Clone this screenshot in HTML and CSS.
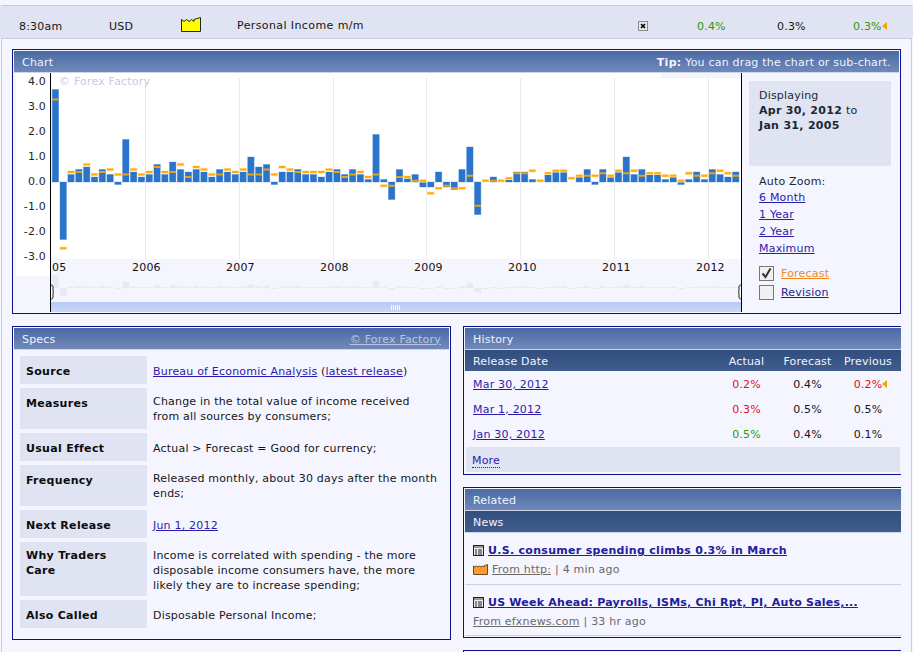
FILE: index.html
```html
<!DOCTYPE html>
<html lang="en">
<head>
<meta charset="utf-8">
<title>Personal Income m/m</title>
<link rel="stylesheet" href="styles.css">
</head>
<body>
<div class="page">
  <div class="top-strip"></div>
  <div class="event-row">
    <span>8:30am</span>
    <span>USD</span>
    <svg class="impact" width="20" height="15" viewBox="0 0 20 15"><path d="M.5 14.500V2.500L3 4.500 5.500 2.500 8 4.500 10.500 2.500 13 4.500V2.500L19.500.5V14.500Z" fill="#ffff00" stroke="#222" stroke-width="1"/></svg>
    <span class="event-title">Personal Income m/m</span>
    <svg width="10" height="10" viewBox="0 0 10 10"><rect x=".5" y=".5" width="9" height="9" fill="#e8e8e8" stroke="#8a8a8a"/><path d="M3 3l4 4M7 3l-4 4" stroke="#000" stroke-width="1.6"/></svg>
    <span class="good">0.4%</span>
    <span>0.3%</span>
    <span><span class="good flagged">0.3%<svg class="flag" width="6" height="8" viewBox="0 0 6 8"><path d="M0 4l5-4v8z" fill="#f2a400"/></svg></span></span>
  </div>
  <div class="detail">
    <section class="panel">
      <header class="panel-head"><span>Chart</span><span><b>Tip:</b> You can drag the chart or sub-chart.</span></header>
      <div class="chart-body">
        <svg class="chart" id="chart" width="728" height="239" viewBox="14 73 728 239">
          <defs>
            <linearGradient id="band" x1="0" y1="0" x2="0" y2="1"><stop offset="0" stop-color="#b6c9f5"/><stop offset="1" stop-color="#c9d7f9"/></linearGradient>
          </defs>
          <rect class="plot-back" x="14" y="73" width="728" height="239"/>
          <rect class="plot-white" x="16" y="73" width="34" height="203"/>
          <rect class="plot-white" x="51" y="78" width="690" height="181"/>
          <rect class="plot-white" x="51" y="73" width="610" height="5"/>
          <g class="grid">
            <rect x="145" y="78" width="1" height="181"/><rect x="239" y="78" width="1" height="181"/>
            <rect x="333" y="78" width="1" height="181"/><rect x="426" y="78" width="1" height="181"/>
            <rect x="520" y="78" width="1" height="181"/><rect x="614" y="78" width="1" height="181"/>
            <rect x="708" y="78" width="1" height="181"/>
          </g>
          <text class="watermark" x="59" y="85">© Forex Factory</text>
          <g id="mini"></g>
          <g id="bars"></g>
          <g class="ticks">
            <text x="46" y="85">4.0</text><text x="46" y="110">3.0</text><text x="46" y="135">2.0</text>
            <text x="46" y="160">1.0</text><text x="46" y="185">0.0</text><text x="46" y="210">-1.0</text>
            <text x="46" y="235">-2.0</text><text x="46" y="260">-3.0</text>
          </g>
          <g class="years">
            <text x="52" y="271">05</text><text x="132" y="271">2006</text><text x="226" y="271">2007</text>
            <text x="320" y="271">2008</text><text x="414" y="271">2009</text><text x="508" y="271">2010</text>
            <text x="602" y="271">2011</text><text x="696" y="271">2012</text>
          </g>
          <rect x="51" y="302" width="690" height="10" fill="url(#band)"/>
          <path class="grip" d="M391.500 305v5M393.500 305v5M395.500 305v5M397.500 305v5M399.500 305v5"/>
          <path class="handle" d="M50.500 285h1q1.500 0 1.500 2v4l.5 1-.5 1v4q0 2-1.500 2h-1z"/>
          <path class="handle" d="M741.500 285h-1q-1.500 0-1.500 2v4l-.5 1 .5 1v4q0 2 1.500 2h1z"/>
          <rect class="axis" x="50" y="73" width="1" height="239"/>
          <rect class="axis" x="741" y="73" width="1" height="239"/>
        </svg>
        <aside class="chart-side">
          <div class="display-box">Displaying<br><b>Apr 30, 2012</b> to<br><b>Jan 31, 2005</b></div>
          <div class="zoom-title">Auto Zoom:</div>
          <a class="zoom-link" href="#">6 Month</a>
          <a class="zoom-link" href="#">1 Year</a>
          <a class="zoom-link" href="#">2 Year</a>
          <a class="zoom-link" href="#">Maximum</a>
          <div class="series first-series">
            <svg width="15" height="15" viewBox="0 0 15 15"><rect x=".5" y=".5" width="14" height="14" fill="#f0f0f0" stroke="#777"/><path d="M3.500 7.500l3 3.500L11.500 2.500" fill="none" stroke="#333" stroke-width="2"/></svg>
            <a class="forecast-link" href="#">Forecast</a>
          </div>
          <div class="series">
            <svg width="15" height="15" viewBox="0 0 15 15"><rect x=".5" y=".5" width="14" height="14" fill="#f0f0f0" stroke="#777"/></svg>
            <a class="revision-link" href="#">Revision</a>
          </div>
        </aside>
      </div>
    </section>
    <div class="columns">
      <section class="panel">
        <header class="panel-head"><span>Specs</span><a class="head-link" href="#">© Forex Factory</a></header>
        <div class="specs">
          <div class="label row-one">Source</div>
          <div class="value single"><a href="#">Bureau of Economic Analysis</a> (<a href="#">latest release</a>)</div>
          <div class="label row-two">Measures</div>
          <div class="value">Change in the total value of income received<br>from all sources by consumers;</div>
          <div class="label row-one">Usual Effect</div>
          <div class="value single">Actual &gt; Forecast = Good for currency;</div>
          <div class="label row-two">Frequency</div>
          <div class="value">Released monthly, about 30 days after the month<br>ends;</div>
          <div class="label row-one">Next Release</div>
          <div class="value single"><a href="#">Jun 1, 2012</a></div>
          <div class="label row-three tight">Why Traders<br>Care</div>
          <div class="value">Income is correlated with spending - the more<br>disposable income consumers have, the more<br>likely they are to increase spending;</div>
          <div class="label row-one">Also Called</div>
          <div class="value single">Disposable Personal Income;</div>
        </div>
      </section>
      <div class="stack">
        <section class="panel clipped">
          <header class="panel-head"><span>History</span></header>
          <div class="history-row sub-head"><span>Release Date</span><span>Actual</span><span>Forecast</span><span>Previous</span></div>
          <div class="history-row"><a href="#">Mar 30, 2012</a><span class="bad">0.2%</span><span>0.4%</span><span><span class="bad flagged">0.2%<svg class="flag" width="6" height="8" viewBox="0 0 6 8"><path d="M0 4l5-4v8z" fill="#f2a400"/></svg></span></span></div>
          <div class="history-row"><a href="#">Mar 1, 2012</a><span class="bad">0.3%</span><span>0.5%</span><span>0.5%</span></div>
          <div class="history-row"><a href="#">Jan 30, 2012</a><span class="good">0.5%</span><span>0.4%</span><span>0.1%</span></div>
          <div class="more"><a href="#">More</a></div>
        </section>
        <section class="panel clipped">
          <header class="panel-head"><span>Related</span></header>
          <div class="sub-head news-head">News</div>
          <article class="news-item">
            <div class="news-title">
              <svg width="11" height="11" viewBox="0 0 11 11"><rect x=".5" y=".5" width="10" height="10" fill="#ececec" stroke="#222"/><rect x="1" y="1" width="9" height="2" fill="#999"/><path d="M2 5h2M5 5h4M2 7h2M5 7h4M2 9h2M5 9h4" stroke="#222"/></svg>
              <a href="#">U.S. consumer spending climbs 0.3% in March</a>
            </div>
            <div class="news-meta">
              <svg width="15" height="11" viewBox="0 0 15 11"><path d="M.5 10.500V2l1.500 1 1.500-1 1.500 1 1.500-1 1.500 1 1.500-1 1.500 1V2L14.500.5v10z" fill="#ff9a2e" stroke="#6b4a2a"/></svg>
              <a href="#">From http:</a><span>| 4 min ago</span>
            </div>
          </article>
          <article class="news-item last">
            <div class="news-title long">
              <svg width="11" height="11" viewBox="0 0 11 11"><rect x=".5" y=".5" width="10" height="10" fill="#ececec" stroke="#222"/><rect x="1" y="1" width="9" height="2" fill="#999"/><path d="M2 5h2M5 5h4M2 7h2M5 7h4M2 9h2M5 9h4" stroke="#222"/></svg>
              <a href="#">US Week Ahead: Payrolls, ISMs, Chi Rpt, PI, Auto Sales,...</a>
            </div>
            <div class="news-meta"><a href="#">From efxnews.com</a><span>| 33 hr ago</span></div>
          </article>
        </section>
        <section class="panel clipped next-panel"></section>
      </div>
    </div>
  </div>
</div>
<script src="chart.js"></script>
</body>
</html>
```
FILE: styles.css
```css
* { box-sizing: border-box; }
html, body { margin: 0; padding: 0; }
body { background: #f4f5ff; color: #161616; font: 11px/15px "DejaVu Sans", Verdana, sans-serif; letter-spacing: .2px; }
a { color: #2d1cab; }
b { letter-spacing: .3px; }
.page { width: 913px; height: 652px; overflow: hidden; }
.top-strip { height: 6px; margin-left: 1px; width: 911px; background: #f4f6ff; border-bottom: 1px solid #c9cce0; }
.event-row {
  display: grid;
  grid-template-columns: 90px 72px 56px 401px 59px 80px 76px 50px;
  align-items: center;
  height: 32px;
  padding: 8px 0 0 19px;
  background: #e0e3f1;
}
.event-title { position: relative; top: -1px; letter-spacing: .4px; }
.impact { margin-top: -3px; }
.good { color: #2f9a00; }
.bad { color: #dd1020; }
.flagged { position: relative; display: inline-block; }
.flag { position: absolute; left: 100%; top: 3px; }
.detail {
  width: 911px;
  margin-left: 1px;
  height: 614px;
  padding: 10px 10px 0 10px;
  background: #f4f5ff;
  border: 1px solid #c9cce0;
  border-width: 1px 1px 0 1px;
}
.panel { border: 1px solid #10108c; padding: 1px; }
.panel-head {
  display: flex;
  justify-content: space-between;
  align-items: center;
  height: 22px;
  padding: 1px 8px 0;
  color: #f0f4ff;
  background: linear-gradient(#4a6aa5, #7189b9);
  border-bottom: 1px solid #cdd5e8;
}
.head-link { color: #b9c7e2; }
.chart-body { display: flex; }
.chart { display: block; flex: none; }
.plot-back { fill: #f4f5fd; }
.plot-white { fill: #fff; }
.grid rect { fill: #e8e9ee; }
.watermark { fill: #c6ccde; font-size: 11px; }
.ticks text { text-anchor: end; fill: #1c2733; font-size: 11px; }
.years text { fill: #111; font-size: 11px; }
.axis { fill: #000; }
.grip { stroke: #f4f7ff; stroke-width: 1; fill: none; }
.handle { fill: #fff; stroke: #222; stroke-width: 1; }
.bar { fill: #2a74cc; stroke: #b9d1ef; stroke-width: 1; paint-order: stroke; }
.fc { fill: #ffab00; stroke: #ffe9bd; stroke-width: 1.5; paint-order: stroke; }
.fc-over { fill: #e9a312; stroke: none; }
.mini-bar { fill: #e7e9f4; }
.chart-side { flex: 1; height: 239px; padding: 8px 0 0 7px; color: #1c2733; }
.display-box { width: 142px; height: 85px; padding: 7px 10px; background: #e0e3f1; }
.zoom-title { margin: 8px 0 0 10px; height: 16px; }
.zoom-link { display: block; width: max-content; margin: 0 0 2px 10px; }
.series { display: flex; align-items: center; gap: 7px; height: 19px; margin-left: 10px; }
.first-series { margin-top: 8px; }
.forecast-link { color: #ef8a1a; }
.revision-link { color: #1f1f86; }
.columns { display: grid; grid-template-columns: 439px 438px; gap: 12px; margin-top: 12px; align-items: start; }
.specs {
  display: grid;
  grid-template-columns: 127px 1fr;
  row-gap: 4px;
  padding: 6px 6px 10px;
}
.label { padding: 8px 6px 0; font-weight: bold; letter-spacing: .3px; color: #0c0c0c; background: #e0e3f1; }
.tight { padding-top: 6px; }
.row-one { height: 28px; }
.row-two { height: 41px; }
.row-three { height: 54px; }
.value { padding: 6px 0 0 6px; }
.single { padding-top: 8px; }
.stack { display: flex; flex-direction: column; gap: 12px; }
.clipped { border-right: 0; padding-right: 0; }
.history-row { display: grid; grid-template-columns: 1fr 61px 61px 60px; align-items: center; height: 25px; padding: 1px 3px 0 8px; text-align: center; }
.history-row > :first-child { text-align: left; justify-self: start; }
.sub-head { height: 21px; color: #f0f4ff; background: linear-gradient(#324e7e, #405c8c); }
.news-head { height: 22px; padding: 4px 8px 0; border-bottom: 1px solid #cdd5e8; }
.more { height: 25px; margin: 1px; padding: 6px 6px 0; background: #e0e3f1; }
.more a { text-decoration: none; border-bottom: 1px dotted #2d1cab; }
.news-item { height: 52px; padding: 10px 8px 0; border-bottom: 1px solid #cdd0e4; color: #6a6a6a; }
.last { height: 51px; }
.news-title { display: flex; align-items: center; gap: 4px; height: 15px; font-weight: bold; letter-spacing: .3px; }
.news-title.long { letter-spacing: .23px; }
.news-title a { color: #20209a; }
.news-meta { display: flex; align-items: center; gap: 4px; height: 15px; margin-top: 4px; }
.news-meta a { color: #6a6a6a; }
.next-panel { height: 30px; }
```
FILE: chart.js
```js
var NS = 'http://www.w3.org/2000/svg';
var actual = [3.7,-2.3,.3,.5,.6,.2,.5,.3,-.1,1.7,.4,.2,.3,.7,.3,.8,.5,.4,.5,.4,.2,.5,.4,.3,.4,1,.6,.7,-.1,.4,.4,.5,.3,.3,.2,.4,.5,.3,.5,.3,.1,1.9,.1,-.7,.5,.2,.3,-.2,-.2,.4,-.2,-.3,.5,1.4,-1.3,0,.2,0,.1,.4,.4,.1,0,.3,.45,.45,0,.2,.5,-.1,.5,.2,.4,1,.3,.5,.3,.3,.1,.2,-.1,.1,.4,.1,.5,.3,.2,.4];
var forecast = [3.3,-2.65,.4,.4,.7,.3,.4,.5,.3,.3,.5,.3,.4,.6,.4,.4,.7,.2,.6,.5,.3,.3,.5,.4,.5,.3,.3,.5,.3,.6,.5,.4,.4,.4,.4,.5,.4,.2,.3,.4,.2,.3,-.15,-.15,.2,.2,.05,.05,-.45,-.25,-.15,-.25,-.25,.25,-.95,.05,.05,.05,.15,.35,.35,.45,.05,.35,.45,.45,.15,.25,.25,.25,.35,.25,.45,.35,.45,.25,.35,.35,.25,.25,.05,.35,.25,.25,.35,.45,.35,.25];

function add(parent, cls, x, y, w, h) {
  var r = document.createElementNS(NS, 'rect');
  r.setAttribute('class', cls);
  r.setAttribute('x', x);
  r.setAttribute('y', y);
  r.setAttribute('width', w);
  r.setAttribute('height', h);
  parent.appendChild(r);
}

var bars = document.getElementById('bars');
var mini = document.getElementById('mini');
actual.forEach(function (v, i) {
  var x = 52.2 + 7.82 * i;
  if (v !== 0) {
    add(bars, 'bar', x, v > 0 ? 182 - 25 * v : 182, 6.4, Math.abs(v) * 25);
  }
  var h = Math.max(Math.abs(v) * 3.5, 1);
  add(mini, 'mini-bar', x, v > 0 ? 288 - h : 288, 6.5, h);
});
forecast.forEach(function (v, i) {
  var x = 52.2 + 7.82 * i;
  var y = 181 - 25 * v;
  var a = actual[i];
  var inside = a > 0 ? (v > 0 && v < a) : (a < 0 && v < 0 && v > a);
  add(bars, inside ? 'fc fc-over' : 'fc', x, y, 6.4, 2);
});
```
